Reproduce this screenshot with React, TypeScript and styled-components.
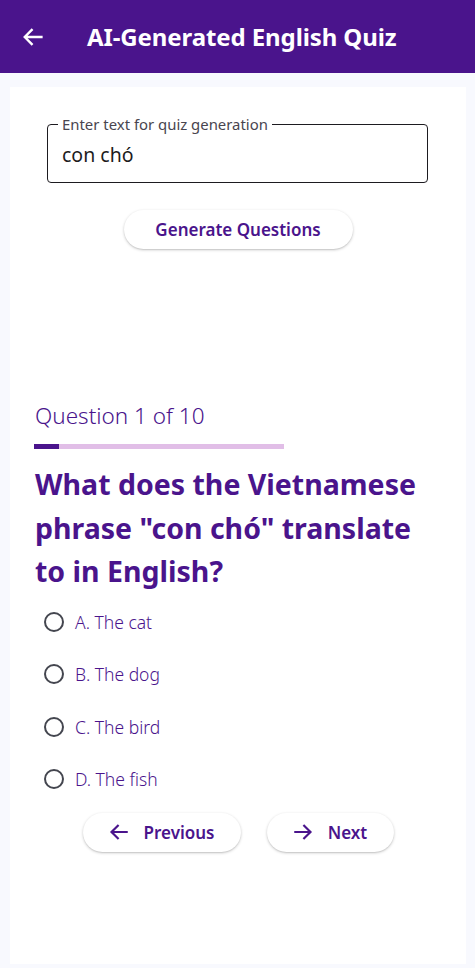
import React from "react";
import styled, { createGlobalStyle } from "styled-components";

const Global = createGlobalStyle`
  html, body { margin: 0; padding: 0; background: #f8f9fe; }
  * { box-sizing: border-box; }
  body { font-family: "Noto Sans", "Open Sans", sans-serif; }
`;

const PURPLE = "#4a148c";

const Page = styled.div`
  width: 475px;
  min-height: 968px;
  display: flex;
  flex-direction: column;
  background: #f8f9fe;
`;

const AppBar = styled.header`
  height: 73px;
  background: ${PURPLE};
  display: flex;
  align-items: center;
  padding-left: 21px;
  color: #fff;
`;

const BackButton = styled.button`
  width: 24px;
  height: 24px;
  padding: 0;
  border: none;
  background: transparent;
  color: #fff;
  display: flex;
  align-items: center;
  justify-content: center;
`;

const Title = styled.h1`
  margin: 0 0 0 42px;
  font-size: 24px;
  font-weight: 700;
  letter-spacing: -0.1px;
  color: #fff;
`;

const Card = styled.main`
  flex: 1;
  margin: 14px 9px 4px 10px;
  background: #fff;
  display: flex;
  flex-direction: column;
  padding: 37px 25px 0 25px;
`;

const FieldBox = styled.div`
  position: relative;
  margin: 0 13px 0 12px;
  height: 59px;
  border: 1px solid #1d1b20;
  border-radius: 4px;
  padding: 0 14px;
  display: flex;
  align-items: center;
`;

const FloatingLabel = styled.label`
  position: absolute;
  top: -10px;
  left: 10px;
  padding: 0 4px;
  background: #fff;
  font-size: 14.9px;
  line-height: 18px;
  color: #49454f;
`;

const Input = styled.input`
  border: none;
  outline: none;
  font-family: inherit;
  font-size: 19.5px;
  color: #1d1b20;
  width: 100%;
  padding: 0;
  margin-top: 2px;
  background: transparent;
`;

const PillButton = styled.button<{ $w: number }>`
  height: 39px;
  border: none;
  border-radius: 20px;
  background: #fff;
  box-shadow: 0 1px 3px rgba(0, 0, 0, 0.22), 0 1px 1px rgba(0, 0, 0, 0.06);
  color: ${PURPLE};
  font-family: inherit;
  font-size: 17px;
  font-weight: 600;
  display: flex;
  align-items: center;
  justify-content: center;
  gap: 15px;
  padding: 0;
  width: ${(p) => p.$w}px;
`;

const CenterRow = styled.div<{ $mt: number; $gap?: number }>`
  display: flex;
  justify-content: center;
  gap: ${(p) => p.$gap ?? 0}px;
  margin-top: ${(p) => p.$mt}px;
`;

const Counter = styled.div`
  margin-top: 152px;
  font-size: 22.5px;
  font-weight: 300;
  color: ${PURPLE};
  line-height: 30px;
`;

const Track = styled.div`
  margin-top: 13px;
  width: 250px;
  height: 5px;
  background: #e1bee7;
  margin-left: -1px;
`;

const Fill = styled.div`
  height: 100%;
  background: ${PURPLE};
`;

const Question = styled.h2`
  margin: 14px 0 0 0;
  font-size: 28.5px;
  line-height: 43.5px;
  font-weight: 700;
  color: ${PURPLE};
`;

const Options = styled.div`
  display: flex;
  flex-direction: column;
  margin-top: 2px;
`;

const Option = styled.label`
  display: flex;
  align-items: center;
  height: 52.5px;
  padding-left: 9px;
  cursor: pointer;
`;

const Radio = styled.span`
  width: 20px;
  height: 20px;
  border-radius: 50%;
  border: 2.5px solid #44464f;
  flex-shrink: 0;
`;

const OptionText = styled.span`
  margin-left: 11px;
  font-size: 17.5px;
  font-weight: 300;
  color: ${PURPLE};
`;

const Arrow = ({ dir, color, size = 20 }: { dir: "left" | "right"; color: string; size?: number }) => (
  <svg width={size} height={size} viewBox="0 0 24 24" fill="none">
    {dir === "left" ? (
      <path d="M22.5 12H3M11.5 3.5L3 12l8.5 8.5" stroke={color} strokeWidth="2.6" />
    ) : (
      <path d="M1.5 12H21M12.5 3.5L21 12l-8.5 8.5" stroke={color} strokeWidth="2.6" />
    )}
  </svg>
);

const options = ["A. The cat", "B. The dog", "C. The bird", "D. The fish"];

export default function App() {
  return (
    <Page>
      <Global />
      <AppBar>
        <BackButton aria-label="Back">
          <Arrow dir="left" color="#fff" size={22} />
        </BackButton>
        <Title>AI-Generated English Quiz</Title>
      </AppBar>
      <Card>
        <FieldBox>
          <FloatingLabel htmlFor="quiz-text">Enter text for quiz generation</FloatingLabel>
          <Input id="quiz-text" defaultValue="con chó" />
        </FieldBox>
        <CenterRow $mt={27}>
          <PillButton $w={229}>Generate Questions</PillButton>
        </CenterRow>
        <Counter>Question 1 of 10</Counter>
        <Track>
          <Fill style={{ width: `${(1 / 10) * 100}%` }} />
        </Track>
        <Question>
          What does the Vietnamese phrase "con chó" translate to in English?
        </Question>
        <Options>
          {options.map((o) => (
            <Option key={o}>
              <Radio />
              <OptionText>{o}</OptionText>
            </Option>
          ))}
        </Options>
        <CenterRow $mt={7} $gap={26}>
          <PillButton $w={158}>
            <Arrow dir="left" color={PURPLE} />
            Previous
          </PillButton>
          <PillButton $w={127}>
            <Arrow dir="right" color={PURPLE} />
            Next
          </PillButton>
        </CenterRow>
      </Card>
    </Page>
  );
}
